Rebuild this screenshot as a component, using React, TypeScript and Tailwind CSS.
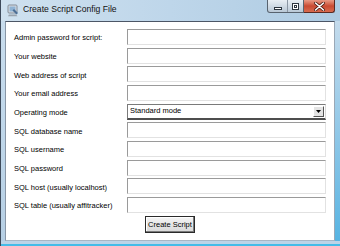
import React from "react";

const fields = [
  "Admin password for script:",
  "Your website",
  "Web address of script",
  "Your email address",
  "Operating mode",
  "SQL database name",
  "SQL username",
  "SQL password",
  "SQL host (usually localhost)",
  "SQL table (usually affitracker)",
];

function TitleIcon() {
  return (
    <svg width="12" height="13" viewBox="0 0 12 13" className="mt-[4px] ml-[6px]">
      <rect x="1" y="1" width="9" height="8" rx="1" fill="#d7dde3" stroke="#6f7a86" strokeWidth="0.8" />
      <rect x="2.5" y="2.5" width="6" height="5" fill="#8fb3d4" />
      <path d="M2 10.5 L9 10.5 L10.5 12.2 L1 12.2 Z" fill="#9aa3ad" />
      <path d="M7 5 L11 9 L9.5 10.5 L5.5 6.5 Z" fill="#4d6f96" />
    </svg>
  );
}

function WinButtons() {
  return (
    <div className="ml-auto mr-[5px] flex h-[13px]">
      <div className="flex h-full w-[37px] items-center rounded-bl-[3px] border border-t-0 border-[#58636f] bg-gradient-to-b from-[#e8eef4] to-[#b9c8d6]">
        <div className="flex w-[19px] justify-center pt-[4px]">
          <div className="h-[3px] w-[8px] border border-[#2d3640] bg-white" />
        </div>
        <div className="h-full w-px bg-[#8a96a3]" />
        <div className="flex flex-1 justify-center">
          <div className="h-[7px] w-[7px] border border-[#2d3640] bg-white p-[1px]">
            <div className="h-full w-full border border-[#2d3640]" />
          </div>
        </div>
      </div>
      <div className="flex h-full w-[31px] items-center justify-center rounded-br-[3px] border border-l-0 border-t-0 border-[#5a2a22] bg-gradient-to-b from-[#e89a86] via-[#c94a32] to-[#d86a4e]">
        <svg width="11" height="9" viewBox="0 0 11 9">
          <path d="M1.5 1 L9.5 8 M9.5 1 L1.5 8" stroke="#4a1a12" strokeWidth="3" strokeLinecap="round" />
          <path d="M1.5 1 L9.5 8 M9.5 1 L1.5 8" stroke="#ffffff" strokeWidth="1.6" strokeLinecap="round" />
        </svg>
      </div>
    </div>
  );
}

function Field({ index }: { index: number }) {
  if (index === 4) {
    return (
      <div className="flex h-[16px] items-center border border-t-[#7a7a7a] border-l-[#7a7a7a] border-b-[#4e4e4e] border-r-[#d8d8d8] border-b-2 bg-white pl-[2px] pr-[1px]">
        <span className="flex-1 text-[7.5px] leading-none text-black">Standard mode</span>
        <div className="flex h-[11px] w-[11px] items-center justify-center border border-t-white border-l-white border-b-[#555] border-r-[#555] bg-[#e4e4e4]">
          <svg width="5" height="3" viewBox="0 0 5 3">
            <path d="M0 0 L5 0 L2.5 3 Z" fill="#000" />
          </svg>
        </div>
      </div>
    );
  }
  return (
    <input
      type="text"
      className="h-[16px] w-full border border-t-[#9a9a9a] border-l-[#9a9a9a] border-b-[#e2e2e2] border-r-[#e2e2e2] bg-white outline-none"
    />
  );
}

export default function App() {
  return (
    <div className="flex h-[246px] w-[340px] flex-col overflow-hidden border-l border-[#3e4a5a] bg-gradient-to-b from-[#cadeee] via-[#c0d7ea] to-[#b6cfe4] font-['Liberation_Sans',Arial,sans-serif]">
      <div className="flex h-[21px] items-start bg-gradient-to-r from-[#cfe1ef] via-[#bed6ea] to-[#aecbe2]">
        <TitleIcon />
        <span className="ml-[4px] mt-[5px] text-[8.6px] leading-none text-[#111]">Create Script Config File</span>
        <WinButtons />
      </div>
      <div className="flex pl-[4px]">
        <div className="h-[220px] w-[330px] border border-t-[#4c5666] border-l-[#8896a6] border-r-[#9aa8b6] border-b-[#a7b6c4] bg-white pl-[8px] pr-[8px] pt-[7px]">
          <div className="flex flex-col gap-[2.67px]">
            {fields.map((label, i) => (
              <div key={label} className="grid h-[16px] grid-cols-[113px_199px] items-center">
                <span className="whitespace-nowrap pt-[2px] text-[7.5px] leading-none text-black">{label}</span>
                <Field index={i} />
              </div>
            ))}
          </div>
          <div className="mt-[3px] flex justify-center">
            <button className="h-[17px] w-[50px] border border-[#2a2a2a] bg-gradient-to-b from-[#f4f4f4] to-[#d8d8d8] text-[7.5px] leading-none text-black shadow-[inset_-1px_-1px_0_#7a7a7a,inset_1px_1px_0_#ffffff]">
              Create Script
            </button>
          </div>
        </div>
        <div className="w-[5px] bg-gradient-to-b from-[#c4dbec] to-[#56b4e2]" />
      </div>
      <div className="h-[3px] bg-[#bcd4e7]" />
      <div className="h-[2px] bg-[#44bce8]" />
    </div>
  );
}
